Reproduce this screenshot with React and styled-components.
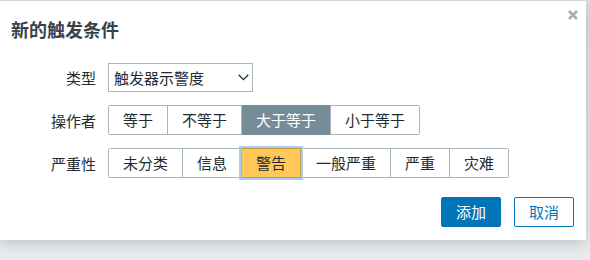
import React from 'react';
import styled, { createGlobalStyle, css } from 'styled-components';

const GlobalStyle = createGlobalStyle`
  html, body {
    margin: 0;
    padding: 0;
    background: #e9ecee;
    font-family: "Noto Sans CJK SC", "Noto Sans", sans-serif;
  }
`;

const Overlay = styled.div`
  width: 590px;
  height: 260px;
  padding-top: 1px;
  box-sizing: border-box;
  background: linear-gradient(#dde1e4, #e9ecee);
`;

const Dialog = styled.div`
  position: relative;
  width: 586px;
  height: 239px;
  box-sizing: border-box;
  background: #fff;
  padding: 17px 12px 0 11px;
  box-shadow: 0 3px 14px rgba(0, 0, 0, 0.18);
  display: flex;
  flex-direction: column;
`;

const Title = styled.h4`
  margin: 0;
  font-size: 18px;
  line-height: 22px;
  font-weight: 700;
  color: #36434d;
`;

const Close = styled.button`
  position: absolute;
  top: 9px;
  right: 8px;
  width: 10px;
  height: 10px;
  padding: 0;
  border: 0;
  background: none;
  display: flex;
`;

const Form = styled.div`
  display: grid;
  grid-template-columns: 85px auto;
  column-gap: 12px;
  row-gap: 13px;
  margin-top: 23px;
  align-items: center;
  justify-items: start;
`;

const Label = styled.label`
  justify-self: end;
  font-size: 15px;
  color: #1f2c33;
`;

const Select = styled.div`
  width: 145px;
  height: 29px;
  box-sizing: border-box;
  border: 1px solid #a9b5bd;
  padding: 0 2px 0 5px;
  display: flex;
  align-items: center;
  justify-content: space-between;
  font-size: 15px;
  color: #1f2c33;
  background: #fff;
`;

const Caret = styled.svg`
  width: 11px;
  height: 7px;
  margin-right: 1px;
`;

const Group = styled.div`
  display: inline-flex;
  height: 30px;
  box-sizing: border-box;
  border: 1px solid #a9b5bd;
  border-radius: 2px;
`;

const Segment = styled.div`
  position: relative;
  padding: 0 14px;
  font-size: 15px;
  line-height: 28px;
  color: #1f2c33;
  background: #fff;
  & + & {
    border-left: 1px solid #a9b5bd;
  }
  ${p => p.$tone === 'dark' && css`
    background: #768d99;
    color: #fff;
    margin: -1px 0;
    line-height: 30px;
  `}
  ${p => p.$tone === 'warning' && css`
    background: #ffc859;
    color: #1f2c33;
    margin: -1px 0;
    line-height: 28px;
    border: 1px solid #c69a3c;
    z-index: 1;
    box-shadow: 0 0 0 2px #a9cdf2;
  `}
`;

const Footer = styled.div`
  display: flex;
  justify-content: flex-end;
  gap: 13px;
  margin-top: 19px;
`;

const Button = styled.button`
  height: 30px;
  padding: 0 14px;
  border: 1px solid #0275b8;
  border-radius: 2px;
  font-family: inherit;
  font-size: 15px;
  line-height: 28px;
  background: ${p => (p.$primary ? '#0275b8' : '#fff')};
  color: ${p => (p.$primary ? '#fff' : '#0275b8')};
`;

const operators = ['等于', '不等于', '大于等于', '小于等于'];
const severities = ['未分类', '信息', '警告', '一般严重', '严重', '灾难'];

const App = () => (
  <>
    <GlobalStyle />
    <Overlay>
      <Dialog>
        <Title>新的触发条件</Title>
        <Close aria-label="关闭">
          <svg width="10" height="10" viewBox="0 0 10 10">
            <path d="M1 1L9 9M9 1L1 9" stroke="#a6afb6" strokeWidth="2.6" />
          </svg>
        </Close>
        <Form>
          <Label>类型</Label>
          <Select>
            触发器示警度
            <Caret viewBox="0 0 11 7">
              <path d="M0.7 0.8L5.5 5.6L10.3 0.8" fill="none" stroke="#1f2c33" strokeWidth="1.3" />
            </Caret>
          </Select>
          <Label>操作者</Label>
          <Group>
            {operators.map(o => (
              <Segment key={o} $tone={o === '大于等于' ? 'dark' : undefined}>{o}</Segment>
            ))}
          </Group>
          <Label>严重性</Label>
          <Group>
            {severities.map(s => (
              <Segment key={s} $tone={s === '警告' ? 'warning' : undefined}>{s}</Segment>
            ))}
          </Group>
        </Form>
        <Footer>
          <Button $primary>添加</Button>
          <Button>取消</Button>
        </Footer>
      </Dialog>
    </Overlay>
  </>
);

export default App;
